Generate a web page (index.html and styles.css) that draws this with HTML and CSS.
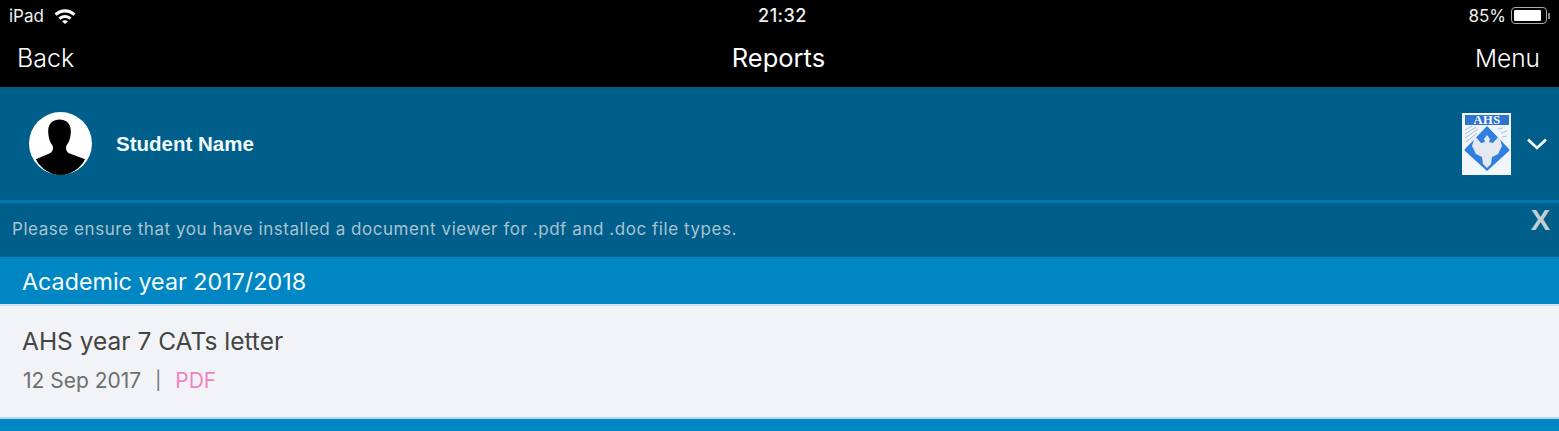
FILE: index.html
```html
<!DOCTYPE html>
<html lang="en">
  <head>
    <meta charset="UTF-8" />
    <meta name="viewport" content="width=device-width, initial-scale=1.0" />
    <title>Reports</title>
    <link rel="stylesheet" href="styles.css">
  </head>
  <body>
    <div class="status-bar">
      <div class="status-left">
        <span>iPad</span>
        <svg class="wifi" viewBox="0 0 22 16">
          <path d="M0.5 5.5C6.5 -0.2 15.5 -0.2 21.5 5.5L19.4 7.8C14.5 3.3 7.5 3.3 2.6 7.8Z" />
          <path d="M4.4 9.6C8.1 6.2 13.9 6.2 17.6 9.6L15.5 11.8C12.9 9.5 9.1 9.5 6.5 11.8Z" />
          <path d="M8 13.2C9.8 11.8 12.2 11.8 14 13.2L11 16Z" />
        </svg>
      </div>
      <div class="status-time">21:32</div>
      <div class="status-right">
        <span>85%</span>
        <div class="battery"><div class="battery-level"></div></div>
        <div class="battery-tip"></div>
      </div>
    </div>

    <div class="nav-bar">
      <div class="nav-link">Back</div>
      <div class="nav-title">Reports</div>
      <div class="nav-link nav-link-right">Menu</div>
    </div>

    <div class="student">
      <div class="student-info">
        <svg class="avatar" viewBox="0 0 64 64">
          <circle cx="32" cy="32" r="32" fill="#fff" />
          <path fill="#000" d="M7 48L20 42.5C24 41 25 38 24 34C20.5 30 19.5 24 19.5 19C19.5 11 25 7.5 31 7.5C37 7.5 42.5 11 42.5 19C42.5 24 41.5 30 38 34C37 38 38 41 42 42.5L57 48C52 58 42 64 32 64C22 64 12 58 7 48Z" />
        </svg>
        <div class="student-name">Student Name</div>
      </div>
      <div class="student-school">
        <svg class="crest" viewBox="0 0 49 62">
          <rect width="49" height="62" fill="#f1f6fb" />
          <rect x="3" y="2" width="44" height="10" fill="#2f74cc" />
          <text class="crest-text" x="25" y="11" text-anchor="middle">AHS</text>
          <path class="crest-hatch" d="M3 17L10 13M3 21L14 14M3 25L16 16M4 29L15 20" />
          <path class="crest-hatch" d="M36 16L41 15M39 20L45 18M40 24L45 23" />
          <path d="M25 13L47 36Q48 37 47 38L25 58L3 38Q2 37 3 36Z" fill="#2f80de" />
          <path fill="#e3e9ee" d="M25 22L28 26L27 29L31 30L37 23L40 33L36 41L30 44L29 51L25 55L21 51L20 44L14 41L10 33L13 23L19 30L23 29L22 26Z" />
        </svg>
        <svg class="chevron" viewBox="0 0 20 12">
          <path d="M1 1.5L10 10L19 1.5" />
        </svg>
      </div>
    </div>

    <div class="notice">
      <div class="notice-text">Please ensure that you have installed a document viewer for .pdf and .doc file types.</div>
      <div class="notice-close">X</div>
    </div>

    <div class="year-header">Academic year 2017/2018</div>

    <div class="report">
      <div class="report-title">AHS year 7 CATs letter</div>
      <div class="report-meta">
        <span>12 Sep 2017</span>
        <span class="report-sep">|</span>
        <span class="report-type">PDF</span>
      </div>
    </div>

    <div class="next-header"></div>
  </body>
</html>
```

FILE: styles.css
```css
* {
  margin: 0;
  padding: 0;
  box-sizing: border-box;
}

html,
body {
  height: 431px;
  overflow: hidden;
}

body {
  font-family: Inter, "Open Sans", sans-serif;
  background: #0086c3;
  display: flex;
  flex-direction: column;
}

.status-bar {
  height: 32px;
  background: #000;
  color: #f0f0f0;
  font-size: 17px;
  display: grid;
  grid-template-columns: 1fr auto 1fr;
  align-items: center;
  padding: 0 9px 1px 9px;
}

.status-left {
  display: flex;
  align-items: center;
  gap: 10px;
}

.wifi {
  width: 22px;
  height: 16px;
  fill: #fff;
}

.status-time {
  font-size: 18px;
  font-weight: 500;
  letter-spacing: 0.5px;
  margin-left: 6px;
}

.status-right {
  display: flex;
  align-items: center;
  justify-content: flex-end;
}

.battery {
  width: 36px;
  height: 17px;
  margin-left: 5px;
  padding: 2px;
  border: 1px solid #aaa;
  border-radius: 4px;
}

.battery-level {
  width: 27px;
  height: 100%;
  background: #fff;
  border-radius: 1px;
}

.battery-tip {
  width: 2px;
  height: 6px;
  margin-left: 1px;
  background: #888;
}

.nav-bar {
  height: 55px;
  background: #000;
  color: #fff;
  display: grid;
  grid-template-columns: 1fr auto 1fr;
  align-items: center;
  padding: 0 19px 4px 17px;
}

.nav-link {
  font-size: 25px;
  font-weight: 300;
}

.nav-link-right {
  font-size: 24.5px;
  text-align: right;
}

.nav-title {
  font-size: 25.5px;
  font-weight: 400;
}

.student {
  height: 113px;
  background: #005f8a;
  display: flex;
  justify-content: space-between;
  align-items: center;
  padding: 0 12px 0 29px;
}

.student-info {
  display: flex;
  align-items: center;
  gap: 24px;
}

.avatar {
  width: 63px;
  height: 63px;
}

.student-name {
  font-family: "Liberation Sans", Arial, sans-serif;
  font-size: 20.5px;
  font-weight: 700;
  color: #f2fbff;
}

.student-school {
  display: flex;
  align-items: center;
  gap: 16px;
}

.crest {
  width: 49px;
  height: 62px;
}

.crest-text {
  font-family: "Liberation Serif", serif;
  font-size: 12.5px;
  font-weight: 700;
  letter-spacing: 0.5px;
  fill: #fff;
}

.crest-hatch {
  fill: none;
  stroke: #a5c0dc;
  stroke-width: 1;
}

.chevron {
  width: 20px;
  height: 12px;
  fill: none;
  stroke: #fff;
  stroke-width: 2.6;
}

.notice {
  height: 57px;
  background: #005f8a;
  border-top: 3px solid #0076ad;
  display: flex;
  justify-content: space-between;
  padding: 0 9px 0 12px;
}

.notice-text {
  font-size: 17px;
  letter-spacing: 0.55px;
  color: #a9c3d0;
  padding-top: 16px;
}

.notice-close {
  font-family: "Liberation Sans", Arial, sans-serif;
  font-size: 29px;
  font-weight: 700;
  color: #c3ced4;
  padding-top: 1px;
}

.year-header {
  height: 47px;
  background: #0086c3;
  color: #f4fbff;
  font-size: 23.3px;
  padding: 10px 0 0 22px;
}

.report {
  height: 115px;
  background: #f2f3f6;
  border-top: 2px solid #cfe3ee;
  border-bottom: 2px solid #b5d8ea;
  padding: 20px 0 0 23px;
}

.report-title {
  font-size: 24.5px;
  color: #444;
  margin-left: -1px;
}

.report-meta {
  display: flex;
  gap: 14px;
  font-size: 21px;
  color: #6e6e70;
  margin-top: 12px;
}

.report-sep {
  font-size: 18px;
  line-height: 25px;
}

.report-type {
  color: #f184bf;
}

.next-header {
  flex: 1;
  background: #0086c3;
}
```
